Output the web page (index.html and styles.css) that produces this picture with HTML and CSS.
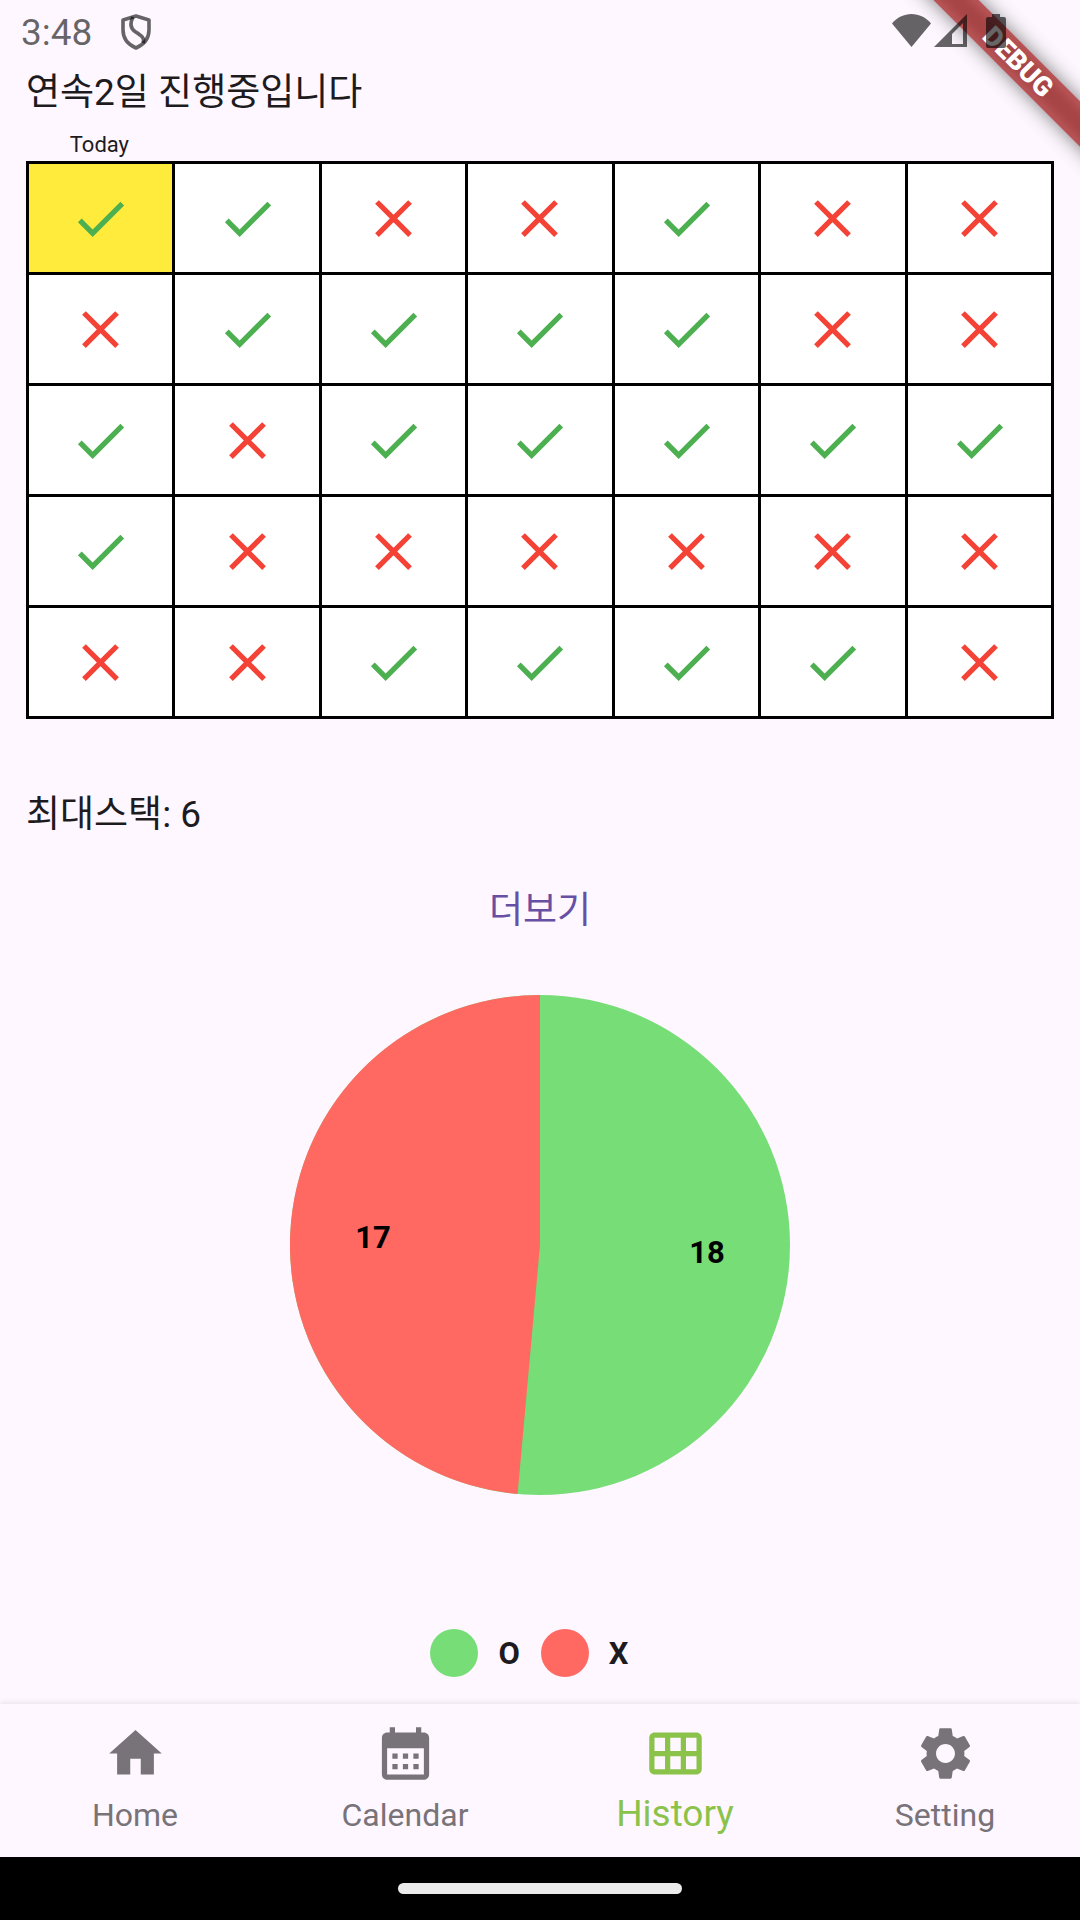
FILE: index.html
```html
<!DOCTYPE html>
<html lang="ko">
<head>
<meta charset="utf-8">
<meta name="viewport" content="width=device-width, initial-scale=1">
<title>History</title>
<link rel="stylesheet" href="styles.css">
</head>
<body>
<svg class="sprite" aria-hidden="true">
  <symbol id="check" viewBox="0 0 24 24"><path d="M9 16.17L4.83 12l-1.42 1.41L9 19 21 7l-1.41-1.41z"/></symbol>
  <symbol id="cross" viewBox="0 0 24 24"><path d="M19 6.41L17.59 5 12 10.59 6.41 5 5 6.41 10.59 12 5 17.59 6.41 19 12 13.41 17.59 19 19 17.59 13.41 12z"/></symbol>
</svg>

<div class="ribbon-corner"><div class="ribbon"><span class="ribbon-text">DEBUG</span></div></div>

<header class="status">
  <div class="status-group">
    <span class="clock">3:48</span>
    <svg class="shield" viewBox="0 0 32 36" fill="none" stroke="currentColor" stroke-width="3.6" stroke-linejoin="round"><path d="M16 2L29 6V16C29 24.500 24 30.500 16 34C8 30.500 3 24.500 3 16V6Z"/><path d="M13 3C10 9 10 14 15 17.500C22 22 25 24 23 29"/></svg>
  </div>
  <div class="status-icons">
    <svg class="wifi" viewBox="0 0 39 33"><path d="M19.500 33L0 9.500C5 3.500 12 0 19.500 0S34 3.500 39 9.500Z"/></svg>
    <svg class="signal" viewBox="0 0 33 33"><path fill-rule="evenodd" d="M33 0V33H0ZM29 9L18 20V30H29Z"/></svg>
    <svg class="battery" viewBox="0 0 20 34"><path d="M6 0H14V3H18Q20 3 20 5V32Q20 34 18 34H2Q0 34 0 32V5Q0 3 2 3H6Z"/></svg>
  </div>
</header>

<main class="content">
  <h1 class="line">연속2일 진행중입니다</h1>
  <div class="columns"><span class="today">Today</span></div>
  <table class="days">
    <tbody>
      <tr><td class="current"><svg class="mark yes"><use href="#check"/></svg></td><td><svg class="mark yes"><use href="#check"/></svg></td><td><svg class="mark no"><use href="#cross"/></svg></td><td><svg class="mark no"><use href="#cross"/></svg></td><td><svg class="mark yes"><use href="#check"/></svg></td><td><svg class="mark no"><use href="#cross"/></svg></td><td><svg class="mark no"><use href="#cross"/></svg></td></tr>
      <tr><td><svg class="mark no"><use href="#cross"/></svg></td><td><svg class="mark yes"><use href="#check"/></svg></td><td><svg class="mark yes"><use href="#check"/></svg></td><td><svg class="mark yes"><use href="#check"/></svg></td><td><svg class="mark yes"><use href="#check"/></svg></td><td><svg class="mark no"><use href="#cross"/></svg></td><td><svg class="mark no"><use href="#cross"/></svg></td></tr>
      <tr><td><svg class="mark yes"><use href="#check"/></svg></td><td><svg class="mark no"><use href="#cross"/></svg></td><td><svg class="mark yes"><use href="#check"/></svg></td><td><svg class="mark yes"><use href="#check"/></svg></td><td><svg class="mark yes"><use href="#check"/></svg></td><td><svg class="mark yes"><use href="#check"/></svg></td><td><svg class="mark yes"><use href="#check"/></svg></td></tr>
      <tr><td><svg class="mark yes"><use href="#check"/></svg></td><td><svg class="mark no"><use href="#cross"/></svg></td><td><svg class="mark no"><use href="#cross"/></svg></td><td><svg class="mark no"><use href="#cross"/></svg></td><td><svg class="mark no"><use href="#cross"/></svg></td><td><svg class="mark no"><use href="#cross"/></svg></td><td><svg class="mark no"><use href="#cross"/></svg></td></tr>
      <tr><td><svg class="mark no"><use href="#cross"/></svg></td><td><svg class="mark no"><use href="#cross"/></svg></td><td><svg class="mark yes"><use href="#check"/></svg></td><td><svg class="mark yes"><use href="#check"/></svg></td><td><svg class="mark yes"><use href="#check"/></svg></td><td><svg class="mark yes"><use href="#check"/></svg></td><td><svg class="mark no"><use href="#cross"/></svg></td></tr>
    </tbody>
  </table>
  <p class="line best">최대스택: 6</p>
  <button class="more" type="button">더보기</button>
  <svg class="pie" viewBox="0 0 500 500" role="img" aria-label="O 18, X 17">
    <circle cx="250" cy="250" r="250" fill="#77dd77"/>
    <path d="M250 250V0A250 250 0 0 0 227.600 499Z" fill="#ff6961"/>
    <text class="slice" x="417" y="268">18</text>
    <text class="slice" x="83" y="253">17</text>
  </svg>
  <ul class="legend">
    <li class="key"><span class="dot dot-o"></span>O</li>
    <li class="key"><span class="dot dot-x"></span>X</li>
  </ul>
</main>

<nav class="tabs">
  <a class="tab" href="#home"><svg class="icon" viewBox="0 0 24 24"><path d="M10 20v-6h4v6h5v-8h3L12 3 2 12h3v8z"/></svg><span class="label">Home</span></a>
  <a class="tab" href="#calendar"><svg class="icon" viewBox="0 0 24 24"><path d="M19 4h-1V2h-2v2H8V2H6v2H5c-1.110 0-1.990.9-1.990 2L3 20c0 1.100.890 2 2 2h14c1.100 0 2-.9 2-2V6c0-1.100-.9-2-2-2zm0 16H5V10h14v10zM9 14H7v-2h2v2zm4 0h-2v-2h2v2zm4 0h-2v-2h2v2zm-8 4H7v-2h2v2zm4 0h-2v-2h2v2zm4 0h-2v-2h2v2z"/></svg><span class="label">Calendar</span></a>
  <a class="tab active" href="#history" aria-current="page"><svg class="icon" viewBox="0 0 24 24"><path d="M20 4H4C2.900 4 2 4.900 2 6v12c0 1.100.9 2 2 2h16c1.100 0 2-.9 2-2V6C22 4.900 21.100 4 20 4zM8 11H4V6h4V11zM14 11h-4V6h4V11zM20 11h-4V6h4V11zM8 18H4v-5h4V18zM14 18h-4v-5h4V18zM20 18h-4v-5h4V18z"/></svg><span class="label">History</span></a>
  <a class="tab" href="#setting"><svg class="icon" viewBox="0 0 24 24"><path d="M19.14 12.94c.04-.3.06-.61.06-.94 0-.32-.02-.64-.07-.94l2.030-1.580c.18-.14.23-.41.12-.61l-1.920-3.320c-.12-.22-.37-.29-.59-.22l-2.390.96c-.5-.38-1.030-.7-1.620-.94l-.36-2.540c-.04-.24-.24-.41-.48-.41h-3.840c-.24 0-.43.17-.47.41l-.36 2.540c-.59.24-1.130.57-1.620.94l-2.390-.96c-.22-.08-.47 0-.59.22L2.740 8.870c-.12.21-.08.47.12.61l2.030 1.580c-.05.3-.09.63-.09.94s.02.64.07.94l-2.030 1.580c-.18.14-.23.41-.12.61l1.920 3.320c.12.22.37.29.59.22l2.390-.96c.5.38 1.030.7 1.620.94l.36 2.540c.05.24.24.41.48.41h3.840c.24 0 .44-.17.47-.41l.36-2.540c.59-.24 1.130-.56 1.620-.94l2.390.96c.22.08.47 0 .59-.22l1.920-3.320c.12-.22.07-.47-.12-.61l-2.010-1.580zM12 15.600c-1.980 0-3.600-1.620-3.600-3.600s1.620-3.600 3.600-3.600 3.600 1.620 3.600 3.600-1.620 3.600-3.600 3.600z"/></svg><span class="label">Setting</span></a>
</nav>
<footer class="gesture"><span class="pill"></span></footer>
</body>
</html>
```
FILE: styles.css
```css
* {
  box-sizing: border-box;
}

body {
  position: relative;
  display: flex;
  flex-direction: column;
  min-height: 100vh;
  margin: 0;
  background: #fef7ff;
  color: #1d1b20;
  font-family: Roboto, "Noto Sans CJK KR", sans-serif;
}

.sprite {
  display: none;
}

/* Debug ribbon across the top right corner */
.ribbon-corner {
  position: absolute;
  top: 0;
  right: 0;
  width: 200px;
  height: 200px;
  overflow: hidden;
}

.ribbon {
  position: absolute;
  top: 46px;
  left: -12px;
  width: 300px;
  height: 32px;
  transform: rotate(45deg);
  color: #fff;
  font-size: 27px;
  font-weight: 900;
  line-height: 32px;
  text-align: center;
}

.ribbon::before,
.ribbon::after {
  position: absolute;
  inset: 0;
  content: "";
}

.ribbon::before {
  background: rgba(0, 0, 0, 0.5);
  filter: blur(10px);
}

.ribbon::after {
  background: rgba(183, 28, 28, 0.63);
}

.ribbon-text {
  position: relative;
  z-index: 1;
}

/* System status bar */
.status {
  position: relative;
  display: flex;
  justify-content: space-between;
  height: 63px;
  padding: 14px 74px 0 21px;
  color: rgba(0, 0, 0, 0.6);
}

.status-group,
.status-icons {
  display: flex;
  align-items: flex-start;
}

.status-group {
  gap: 28px;
}

.clock {
  font-size: 37px;
  line-height: 38px;
}

.shield {
  width: 32px;
  height: 36px;
}

.status-icons {
  fill: currentColor;
}

.wifi {
  width: 39px;
  height: 33px;
  margin-right: 3px;
}

.signal {
  width: 33px;
  height: 33px;
  margin-right: 19px;
}

.battery {
  width: 20px;
  height: 34px;
}

/* Page content */
.content {
  display: flex;
  flex: 1;
  flex-direction: column;
  padding: 0 26px;
}

.line {
  margin: 0;
  font-size: 37px;
  font-weight: 400;
  line-height: 60px;
}

.columns {
  display: grid;
  grid-template-columns: repeat(7, 1fr);
  padding-top: 8px;
}

.today {
  font-size: 22px;
  line-height: 28px;
  padding-bottom: 2px;
  text-align: center;
}

.days {
  width: 100%;
  border-collapse: collapse;
  table-layout: fixed;
  background: #fff;
}

.days td {
  height: 111px;
  padding: 0;
  border: 3px solid #000;
  text-align: center;
}

.days .current {
  background: #ffeb3b;
}

.mark {
  display: block;
  width: 63px;
  height: 63px;
  margin: 0 auto;
}

.yes {
  fill: #4caf50;
}

.no {
  fill: #f44336;
}

.best {
  padding-top: 66px;
}

.more {
  align-self: center;
  margin: 38px 0 56px;
  padding: 0 32px;
  border: 0;
  background: none;
  color: #6750a4;
  font: inherit;
  font-size: 37px;
  line-height: 56px;
}

.pie {
  align-self: center;
  width: 500px;
  height: 500px;
}

.slice {
  font-size: 31px;
  font-weight: 700;
  text-anchor: middle;
}

.legend {
  display: flex;
  justify-content: center;
  margin: 134px 0 0;
  padding: 0;
  list-style: none;
  font-size: 31px;
  font-weight: 700;
}

.key {
  display: flex;
  align-items: center;
  padding-right: 21px;
}

.dot {
  width: 48px;
  height: 48px;
  margin-right: 20px;
  border-radius: 50%;
}

.dot-o {
  background: #77dd77;
}

.dot-x {
  background: #ff6961;
}

/* Bottom navigation */
.tabs {
  display: grid;
  grid-template-columns: repeat(4, 1fr);
  padding: 18px 0 12px;
  background: #fef7ff;
  box-shadow: 0 -1px 6px rgba(0, 0, 0, 0.1);
}

.tab {
  display: flex;
  flex-direction: column;
  align-items: center;
  color: #787379;
  font-size: 32px;
  line-height: 60px;
  text-decoration: none;
}

.active {
  color: #8bc34a;
  font-size: 37px;
  line-height: 58px;
}

.icon {
  width: 63px;
  height: 63px;
  fill: currentColor;
}

.gesture {
  display: flex;
  align-items: center;
  justify-content: center;
  height: 63px;
  background: #000;
}

.pill {
  width: 284px;
  height: 11px;
  border-radius: 6px;
  background: #ebebeb;
}
```
